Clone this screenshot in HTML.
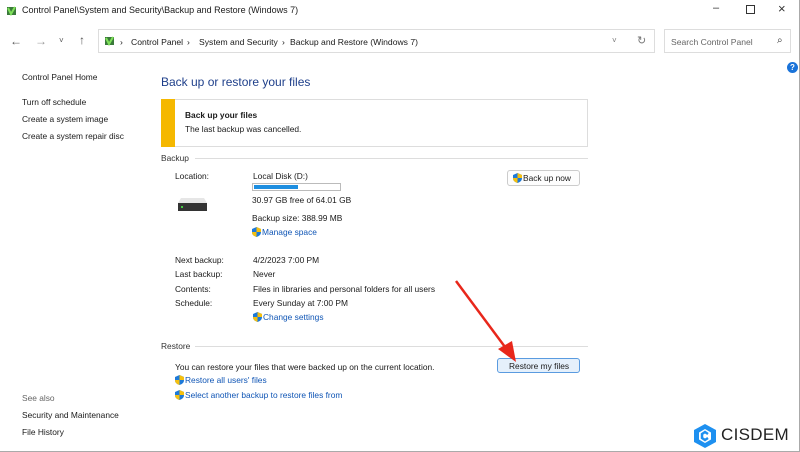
<!DOCTYPE html>
<html><head><meta charset="utf-8"><style>
*{margin:0;padding:0;box-sizing:border-box}
body{width:800px;height:452px;overflow:hidden;background:#fff;font-family:"Liberation Sans",sans-serif;font-size:8.4px;color:#1a1a1a;position:relative}
.a{position:absolute;white-space:nowrap}
.blue{color:#0f55b5}
.sh{display:inline-block;width:9px;height:10px;vertical-align:-2px;margin-right:1px}
</style></head><body>
<div style="position:absolute;right:0;top:0;width:1px;height:452px;background:#aaa"></div>
<div style="position:absolute;left:0;bottom:0;width:800px;height:1px;background:#aaa"></div>
<svg class="a" style="left:6px;top:5px" width="11" height="11"><rect x="1" y="2" width="9" height="8" fill="#3a7a3a"/><path d="M2 3l3 6 4-7" stroke="#7fe05a" stroke-width="2" fill="none"/></svg>
<div class="a" style="left:22px;top:5px;font-size:9px">Control Panel\System and Security\Backup and Restore (Windows 7)</div>
<div class="a" style="left:713px;top:2px;font-size:11px;color:#333">–</div>
<div class="a" style="left:746px;top:5px;width:9px;height:9px;border:1px solid #333"></div>
<div class="a" style="left:778px;top:1px;font-size:13px;color:#333">×</div>
<div class="a" style="left:10px;top:34px;font-size:12px;color:#555">←</div>
<div class="a" style="left:35px;top:34px;font-size:12px;color:#999">→</div>
<div class="a" style="left:59px;top:36px;font-size:8px;color:#555">˅</div>
<div class="a" style="left:79px;top:33px;font-size:12px;color:#555">↑</div>
<div class="a" style="left:98px;top:29px;width:557px;height:24px;border:1px solid #ddd"></div>
<svg class="a" style="left:104px;top:35px" width="11" height="11"><rect x="1" y="2" width="9" height="8" fill="#3a7a3a"/><path d="M2 3l3 6 4-7" stroke="#7fe05a" stroke-width="2" fill="none"/></svg>
<div class="a" style="left:120px;top:37px;font-size:8.6px">›</div>
<div class="a" style="left:131px;top:37px;font-size:8.6px">Control Panel</div>
<div class="a" style="left:187px;top:37px;font-size:8.6px">›</div>
<div class="a" style="left:199px;top:37px;font-size:8.6px">System and Security</div>
<div class="a" style="left:282px;top:37px;font-size:8.6px">›</div>
<div class="a" style="left:290px;top:37px;font-size:8.6px">Backup and Restore (Windows 7)</div>
<div class="a" style="left:612px;top:36px;font-size:8px;color:#777">˅</div>
<div class="a" style="left:637px;top:34px;font-size:11px;color:#777">↻</div>
<div class="a" style="left:664px;top:29px;width:127px;height:24px;border:1px solid #ddd"></div>
<div class="a" style="left:671px;top:37px;font-size:8.6px;color:#666">Search Control Panel</div>
<div class="a" style="left:777px;top:35px;font-size:10px;color:#333">⌕</div>
<div class="a" style="left:787px;top:62px;width:11px;height:11px;border-radius:50%;background:#1a73d9;color:#fff;font-size:8px;text-align:center;line-height:11px;font-weight:bold">?</div>
<div class="a" style="left:22px;top:72px">Control Panel Home</div>
<div class="a" style="left:22px;top:97px">Turn off schedule</div>
<div class="a" style="left:22px;top:114px">Create a system image</div>
<div class="a" style="left:22px;top:131px">Create a system repair disc</div>
<div class="a" style="left:22px;top:393px;color:#666">See also</div>
<div class="a" style="left:22px;top:410px">Security and Maintenance</div>
<div class="a" style="left:22px;top:427px">File History</div>
<div class="a" style="left:161px;top:75px;font-size:12px;color:#1e3f8a">Back up or restore your files</div>
<div class="a" style="left:161px;top:99px;width:427px;height:48px;border:1px solid #ddd"></div>
<div class="a" style="left:161px;top:99px;width:14px;height:48px;background:#f5b800"></div>
<div class="a" style="left:185px;top:110px;font-weight:bold">Back up your files</div>
<div class="a" style="left:185px;top:124px">The last backup was cancelled.</div>
<div class="a" style="left:161px;top:153px;color:#333">Backup</div>
<div class="a" style="left:195px;top:158px;width:393px;height:1px;background:#ddd"></div>
<div class="a" style="left:175px;top:171px">Location:</div>
<div class="a" style="left:253px;top:171px">Local Disk (D:)</div>
<div class="a" style="left:252px;top:183px;width:89px;height:8px;border:1px solid #bbb"></div>
<div class="a" style="left:254px;top:185px;width:44px;height:4px;background:#1e8ee0"></div>
<div class="a" style="left:252px;top:195px">30.97 GB free of 64.01 GB</div>
<div class="a" style="left:252px;top:213px">Backup size: 388.99 MB</div>
<div class="a" style="left:252px;top:227px"><svg class="sh" viewBox="0 0 9 10"><path d="M4.5 0L9 2v3c0 3-2 4-4.5 5C2 9 0 8 0 5V2z" fill="#1d7ad9"/><path d="M4.5 0L9 2v3H4.5zM0 5h4.5v5C2 9 0 8 0 5z" fill="#f5c010"/></svg><span class="blue">Manage space</span></div>
<svg class="a" style="left:177px;top:196px" width="31" height="16"><path d="M4 2h23l3 5v8H1V7z" fill="#e6e6e6"/><rect x="1" y="7" width="29" height="8" fill="#333"/><rect x="4" y="10" width="2" height="2" fill="#4c4"/></svg>
<div class="a" style="left:507px;top:170px;width:73px;height:16px;border:1px solid #ccc;border-radius:3px;background:#fdfdfd"></div>
<div class="a" style="left:513px;top:173px"><svg class="sh" viewBox="0 0 9 10"><path d="M4.5 0L9 2v3c0 3-2 4-4.5 5C2 9 0 8 0 5V2z" fill="#1d7ad9"/><path d="M4.5 0L9 2v3H4.5zM0 5h4.5v5C2 9 0 8 0 5z" fill="#f5c010"/></svg>Back up now</div>
<div class="a" style="left:175px;top:255px">Next backup:</div><div class="a" style="left:253px;top:255px">4/2/2023 7:00 PM</div>
<div class="a" style="left:175px;top:269px">Last backup:</div><div class="a" style="left:253px;top:269px">Never</div>
<div class="a" style="left:175px;top:284px">Contents:</div><div class="a" style="left:253px;top:284px">Files in libraries and personal folders for all users</div>
<div class="a" style="left:175px;top:298px">Schedule:</div><div class="a" style="left:253px;top:298px">Every Sunday at 7:00 PM</div>
<div class="a" style="left:253px;top:312px"><svg class="sh" viewBox="0 0 9 10"><path d="M4.5 0L9 2v3c0 3-2 4-4.5 5C2 9 0 8 0 5V2z" fill="#1d7ad9"/><path d="M4.5 0L9 2v3H4.5zM0 5h4.5v5C2 9 0 8 0 5z" fill="#f5c010"/></svg><span class="blue">Change settings</span></div>
<div class="a" style="left:161px;top:341px;color:#333">Restore</div>
<div class="a" style="left:195px;top:346px;width:393px;height:1px;background:#ddd"></div>
<div class="a" style="left:175px;top:362px">You can restore your files that were backed up on the current location.</div>
<div class="a" style="left:175px;top:375px"><svg class="sh" viewBox="0 0 9 10"><path d="M4.5 0L9 2v3c0 3-2 4-4.5 5C2 9 0 8 0 5V2z" fill="#1d7ad9"/><path d="M4.5 0L9 2v3H4.5zM0 5h4.5v5C2 9 0 8 0 5z" fill="#f5c010"/></svg><span class="blue">Restore all users' files</span></div>
<div class="a" style="left:175px;top:390px"><svg class="sh" viewBox="0 0 9 10"><path d="M4.5 0L9 2v3c0 3-2 4-4.5 5C2 9 0 8 0 5V2z" fill="#1d7ad9"/><path d="M4.5 0L9 2v3H4.5zM0 5h4.5v5C2 9 0 8 0 5z" fill="#f5c010"/></svg><span class="blue">Select another backup to restore files from</span></div>
<div class="a" style="left:497px;top:358px;width:83px;height:15px;border:1px solid #5a9be0;border-radius:3px;background:#e5f0fb"></div>
<div class="a" style="left:509px;top:361px">Restore my files</div>
<svg class="a" style="left:450px;top:275px" width="70" height="90"><line x1="6" y1="6" x2="58" y2="76" stroke="#e8271b" stroke-width="2.5"/><path d="M66 87L48 74 62 66z" fill="#e8271b"/></svg>
<svg class="a" style="left:693px;top:423px" width="24" height="26" viewBox="0 0 24 26"><path d="M12 1L23 7v12L12 25 1 19V7z" fill="#1e90f0"/><path d="M12 6L18 9.5v7L12 20 6 16.5v-7z" fill="#fff"/><path d="M15 11l-3-2-3 2v4l3 2 3-2" fill="none" stroke="#1e90f0" stroke-width="2.5"/></svg>
<div class="a" style="left:721px;top:425px;font-size:17px;color:#222;letter-spacing:0.3px">CISDEM</div>
</body></html>
